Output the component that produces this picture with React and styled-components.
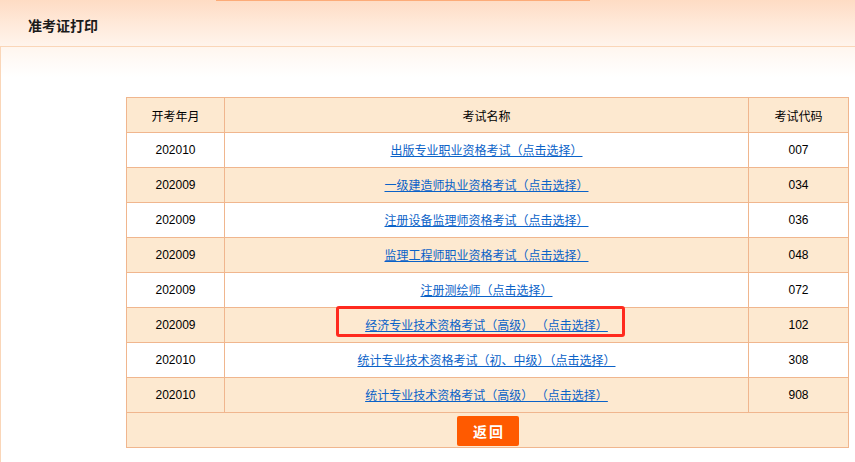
import React from "react";
import styled, { createGlobalStyle } from "styled-components";

const Global = createGlobalStyle`
  html, body { margin: 0; padding: 0; background: #fff; overflow: hidden; }
  body { font-family: "Liberation Sans", "Noto Sans CJK SC", sans-serif; font-size: 12px; color: #000; }
`;

const Page = styled.div`
  width: 100%;
  min-width: 855px;
  position: relative;
  overflow: hidden;
`;

const Header = styled.div`
  height: 46px;
  position: relative;
  background: linear-gradient(to bottom, #fedcc4 0%, #ffeadb 55%, #fff4ec 100%);
  border-bottom: 1px solid #fad6b8;
  display: flex;
  align-items: center;
  padding-left: 28px;
`;

const TopLine = styled.div`
  position: absolute;
  top: 0;
  left: 216px;
  width: 374px;
  height: 1px;
  background: #fcab78;
`;

const Title = styled.h1`
  margin: 0;
  font-family: "Noto Sans CJK SC", sans-serif;
  font-size: 14px;
  font-weight: 700;
  color: #1a1a1a;
  padding-top: 3px;
`;

const Content = styled.div`
  border-left: 1px solid #fad6b8;
  background: linear-gradient(to bottom, #fff6ef 0px, #ffffff 30px);
  padding: 50px 0 20px 125px;
`;

const TableWrap = styled.div`
  position: relative;
  width: 722px;
`;

const Table = styled.table`
  width: 722px;
  border-collapse: collapse;
  table-layout: fixed;
`;

const Row = styled.tr`
  background: ${(p) => (p.$shade ? "#fde9d0" : "#ffffff")};
  height: 35px;
`;

const Th = styled.th`
  border: 1px solid #f0b68e;
  font-family: "Noto Sans CJK SC", sans-serif;
  font-weight: 400;
  font-size: 12px;
  text-align: center;
  padding: 0;
  height: 34px;
`;

const Td = styled.td`
  border: 1px solid #f0b68e;
  text-align: center;
  padding: 0;
  height: 34px;
  font-size: 12px;
`;

const FootCell = styled.td`
  border: 1px solid #f0b68e;
  text-align: center;
  height: 34px;
  padding: 0;
  background: #fde9d0;
`;

const Link = styled.a`
  color: #0a62c8;
  text-decoration: underline;
  font-family: "Noto Sans CJK SC", sans-serif;
  font-size: 12px;
  white-space: pre;
  position: relative;
  top: -1px;
  cursor: pointer;
`;

const BackButton = styled.button`
  width: 62px;
  height: 30px;
  margin-top: 1px;
  margin-left: 1px;
  border: none;
  border-radius: 2px;
  background: #ff5a00;
  color: #fff;
  font-family: "Noto Sans CJK SC", sans-serif;
  font-weight: 700;
  font-size: 14px;
  letter-spacing: 2px;
  cursor: pointer;
  padding: 0 0 0 2px;
`;

const Highlight = styled.div`
  position: absolute;
  left: 210px;
  top: 209px;
  width: 283px;
  height: 25px;
  border: 3px solid #ff2a1e;
  border-radius: 3px;
  pointer-events: none;
`;

const rows = [
  ["202010", "出版专业职业资格考试（点击选择）", "007"],
  ["202009", "一级建造师执业资格考试（点击选择）", "034"],
  ["202009", "注册设备监理师资格考试（点击选择）", "036"],
  ["202009", "监理工程师职业资格考试（点击选择）", "048"],
  ["202009", "注册测绘师（点击选择）", "072"],
  ["202009", "经济专业技术资格考试（高级） （点击选择）", "102"],
  ["202010", "统计专业技术资格考试（初、中级）（点击选择）", "308"],
  ["202010", "统计专业技术资格考试（高级） （点击选择）", "908"],
];

export default function App() {
  return (
    <>
      <Global />
      <Page>
        <Header>
          <TopLine />
          <Title>准考证打印</Title>
        </Header>
        <Content>
          <TableWrap>
            <Table>
              <colgroup>
                <col style={{ width: 98 }} />
                <col style={{ width: 524 }} />
                <col style={{ width: 100 }} />
              </colgroup>
              <thead>
                <Row $shade>
                  <Th>开考年月</Th>
                  <Th>考试名称</Th>
                  <Th>考试代码</Th>
                </Row>
              </thead>
              <tbody>
                {rows.map((r, i) => (
                  <Row key={i} $shade={i % 2 === 1}>
                    <Td>{r[0]}</Td>
                    <Td>
                      <Link>{r[1]}</Link>
                    </Td>
                    <Td>{r[2]}</Td>
                  </Row>
                ))}
                <Row $shade>
                  <FootCell colSpan={3}>
                    <BackButton>返回</BackButton>
                  </FootCell>
                </Row>
              </tbody>
            </Table>
            <Highlight />
          </TableWrap>
        </Content>
      </Page>
    </>
  );
}
